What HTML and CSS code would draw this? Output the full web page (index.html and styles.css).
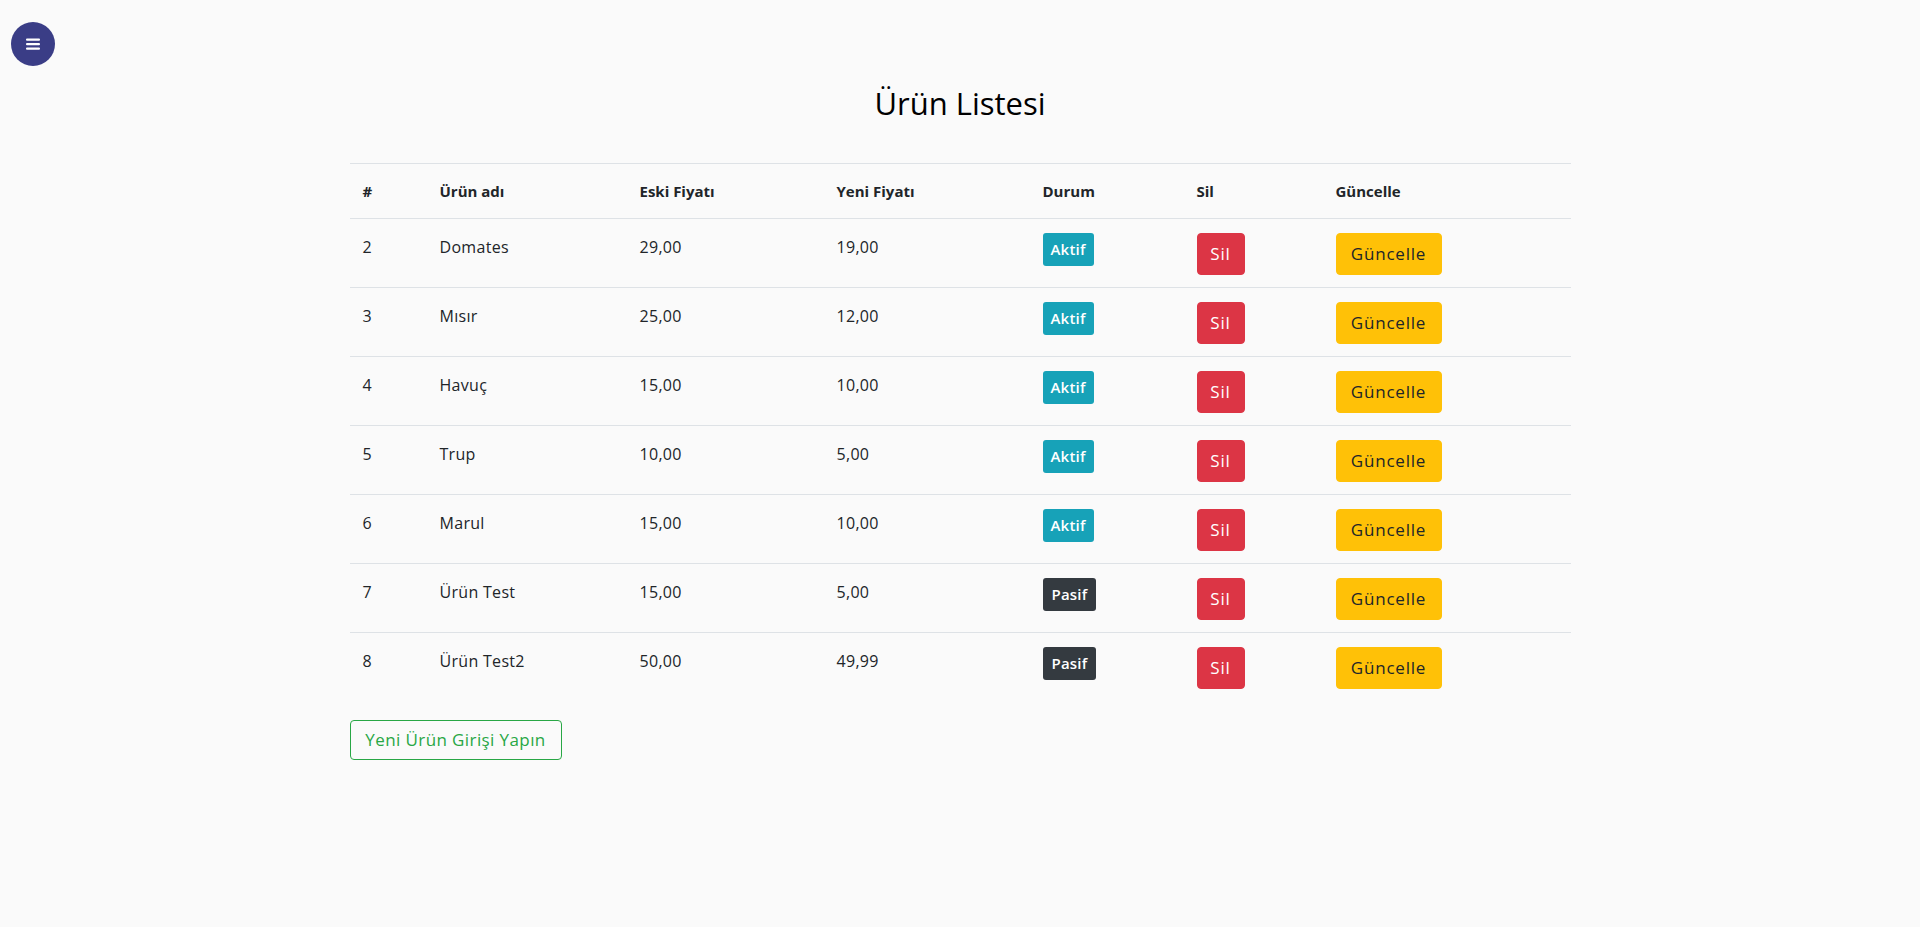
FILE: index.html
```html
<!DOCTYPE html>
<html lang="tr">
<head>
<meta charset="utf-8">
<title>Ürün Listesi</title>
<link rel="stylesheet" href="styles.css">
</head>
<body>
<button class="menu-toggle" aria-label="Menü">
  <svg width="14" height="12" viewBox="0 0 14 12"><rect x="0" y="0.5" width="14" height="2.2" rx="1" fill="#fff"/><rect x="0" y="5" width="14" height="2.2" rx="1" fill="#fff"/><rect x="0" y="9.5" width="14" height="2.2" rx="1" fill="#fff"/></svg>
</button>
<main class="container">
  <h2 class="page-title">Ürün Listesi</h2>
  <table class="product-table">
    <colgroup>
      <col class="c-id"><col class="c-name"><col class="c-old"><col class="c-new"><col class="c-state"><col class="c-del"><col class="c-upd">
    </colgroup>
    <thead>
      <tr><th>#</th><th>Ürün adı</th><th>Eski Fiyatı</th><th>Yeni Fiyatı</th><th>Durum</th><th>Sil</th><th>Güncelle</th></tr>
    </thead>
    <tbody>
      <tr><td>2</td><td>Domates</td><td>29,00</td><td>19,00</td><td><span class="badge badge-info">Aktif</span></td><td><a class="btn btn-danger">Sil</a></td><td><a class="btn btn-warning">Güncelle</a></td></tr>
      <tr><td>3</td><td>Mısır</td><td>25,00</td><td>12,00</td><td><span class="badge badge-info">Aktif</span></td><td><a class="btn btn-danger">Sil</a></td><td><a class="btn btn-warning">Güncelle</a></td></tr>
      <tr><td>4</td><td>Havuç</td><td>15,00</td><td>10,00</td><td><span class="badge badge-info">Aktif</span></td><td><a class="btn btn-danger">Sil</a></td><td><a class="btn btn-warning">Güncelle</a></td></tr>
      <tr><td>5</td><td>Trup</td><td>10,00</td><td>5,00</td><td><span class="badge badge-info">Aktif</span></td><td><a class="btn btn-danger">Sil</a></td><td><a class="btn btn-warning">Güncelle</a></td></tr>
      <tr><td>6</td><td>Marul</td><td>15,00</td><td>10,00</td><td><span class="badge badge-info">Aktif</span></td><td><a class="btn btn-danger">Sil</a></td><td><a class="btn btn-warning">Güncelle</a></td></tr>
      <tr><td>7</td><td>Ürün Test</td><td>15,00</td><td>5,00</td><td><span class="badge badge-dark">Pasif</span></td><td><a class="btn btn-danger">Sil</a></td><td><a class="btn btn-warning">Güncelle</a></td></tr>
      <tr><td>8</td><td>Ürün Test2</td><td>50,00</td><td>49,99</td><td><span class="badge badge-dark">Pasif</span></td><td><a class="btn btn-danger">Sil</a></td><td><a class="btn btn-warning">Güncelle</a></td></tr>
    </tbody>
  </table>
  <a class="btn btn-outline-success">Yeni Ürün Girişi Yapın</a>
</main>
</body>
</html>
```
FILE: styles.css
```css
* { box-sizing: border-box; }
html, body { margin: 0; padding: 0; }
body {
  background: #fafafa;
  color: #212529;
  font-family: "Open Sans", "Noto Sans", "DejaVu Sans", sans-serif;
  font-size: 15px;
}
.menu-toggle {
  position: fixed;
  left: 11px;
  top: 22px;
  width: 44px;
  height: 44px;
  border-radius: 50%;
  border: none;
  background: #3a3d86;
  display: flex;
  align-items: center;
  justify-content: center;
  padding: 0;
  cursor: pointer;
}
.container {
  width: 1221px;
  margin: 0 auto;
  padding-top: 84px;
}
.page-title {
  margin: 0 0 41px;
  text-align: center;
  font-size: 31px;
  line-height: 38px;
  font-weight: 400;
  color: #000;
}
.product-table {
  width: 100%;
  border-collapse: collapse;
  table-layout: fixed;
}
.c-id { width: 77px; }
.c-name { width: 200px; }
.c-old { width: 197px; }
.c-new { width: 206px; }
.c-state { width: 154px; }
.c-del { width: 139px; }
.c-upd { width: 248px; }
.product-table th {
  text-align: left;
  font-weight: 700;
  font-size: 15px;
  line-height: 22px;
  padding: 16px 12px 16px 13px;
  border-top: 1px solid #dee2e6;
  border-bottom: 1px solid #dee2e6;
  vertical-align: top;
}
.product-table td {
  padding: 14px 12px 12px 13px;
  font-size: 16px;
  letter-spacing: 0.3px;
  line-height: 28px;
  border-top: 1px solid #dee2e6;
  vertical-align: top;
  height: 69px;
  font-weight: 400;
}
.badge {
  display: inline-block;
  height: 33px;
  line-height: 33px;
  padding: 0 8px;
  border-radius: 3px;
  color: #fff;
  font-size: 15px;
  letter-spacing: 0.2px;
  font-weight: 600;
  vertical-align: top;
}
.badge-info { background: #17a2b8; }
.badge-dark { background: #343a40; padding: 0 9px; }
.btn {
  display: inline-block;
  height: 42px;
  line-height: 40px;
  padding: 0 12px;
  border: 1px solid transparent;
  border-radius: 4px;
  font-size: 17px;
  letter-spacing: 0.8px;
  vertical-align: top;
  cursor: pointer;
  text-decoration: none;
}
.btn-danger { background: #dc3545; border-color: #dc3545; color: #fff; width: 48px; text-align: center; padding: 0; font-weight: 500; }
.btn-warning { background: #ffc107; border-color: #ffc107; color: #212529; width: 106px; text-align: center; padding: 0; }
.btn-outline-success {
  margin-top: 18px;
  height: 40px;
  line-height: 38px;
  width: 212px;
  text-align: center;
  padding: 0;
  letter-spacing: 0.4px;
  color: #28a745;
  border-color: #28a745;
  background: transparent;
}
```
